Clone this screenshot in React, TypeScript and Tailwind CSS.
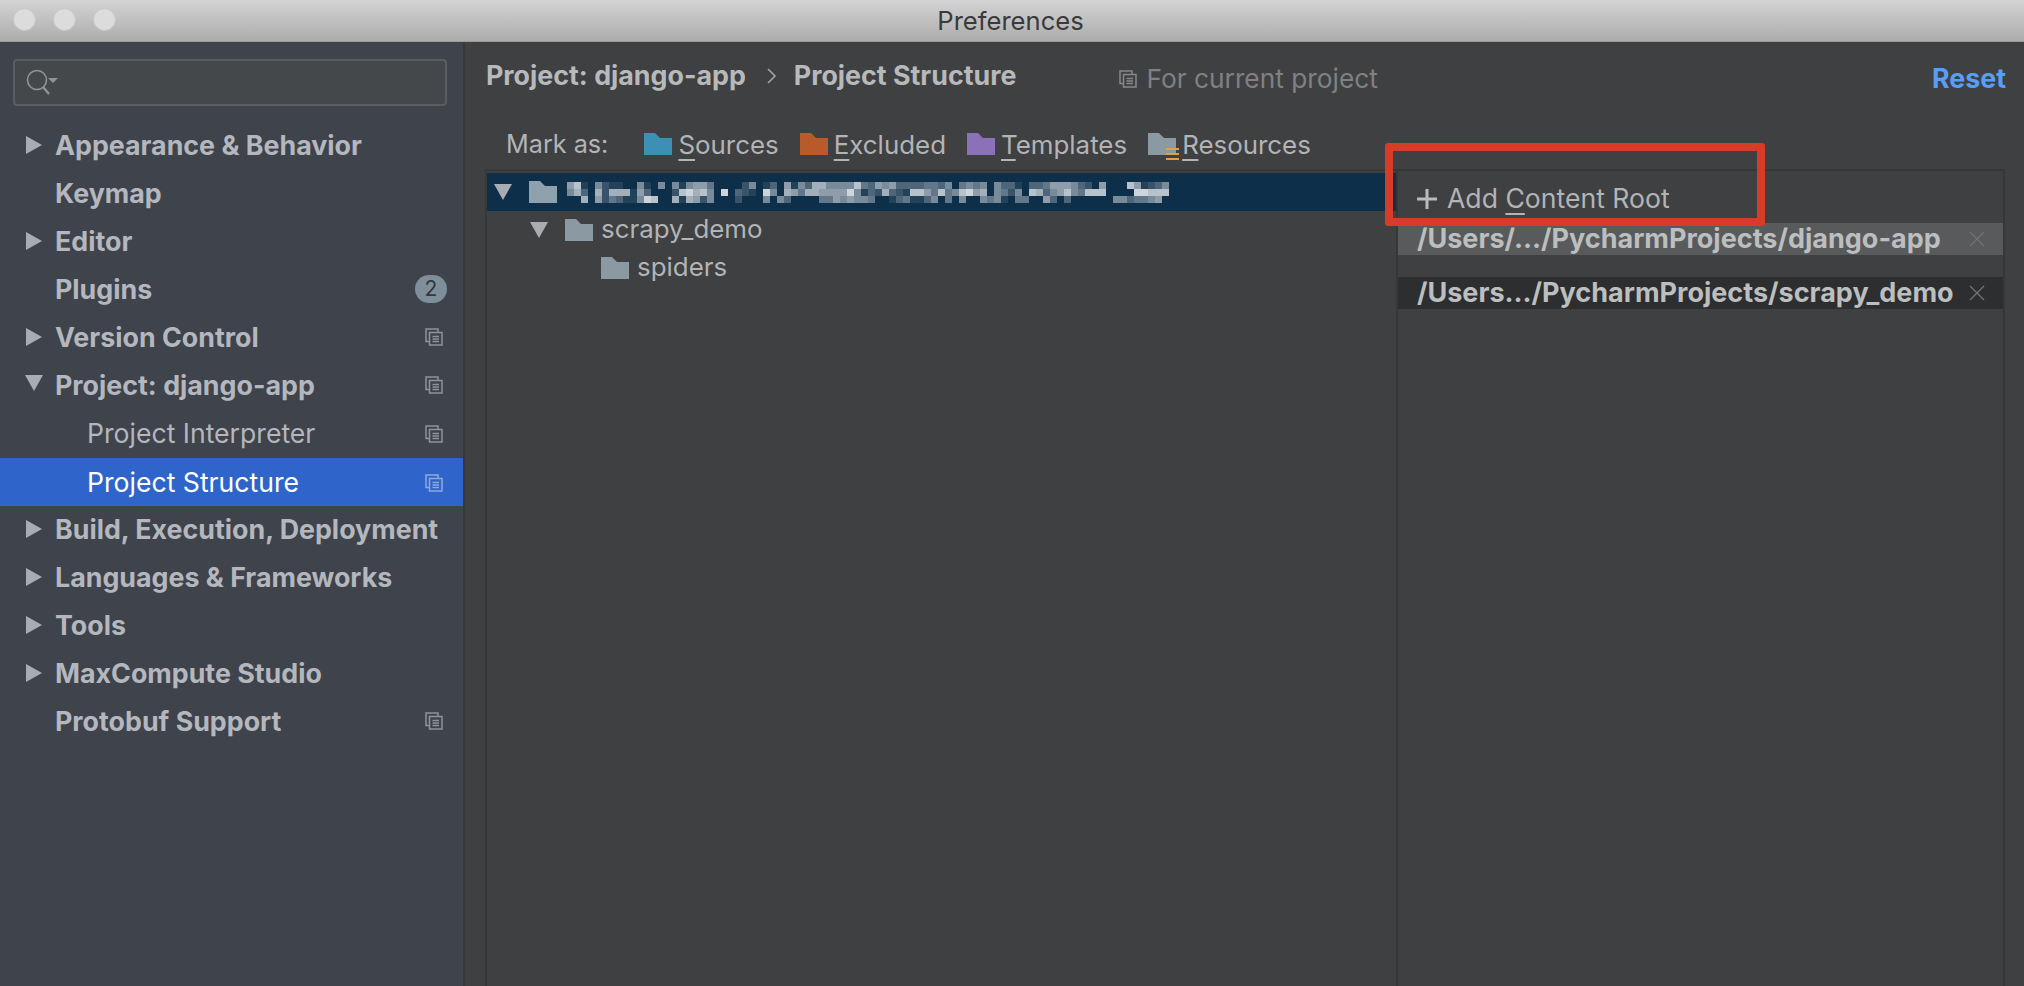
const mosaic = [
  '68105211005105051566400002501306153775555843656333344350454505331033466653206000861235',
  '57307277716300028978509032109507647766669513273218864845896705425087356854888000099888',
  '00706243115980071762500020005053000044656554001341135040500545104400630300000055344560',
];

const Triangle = ({ open = false, className = '' }: { open?: boolean; className?: string }) => (
  <svg width="18" height="18" viewBox="0 0 18 18" className={`fill-[#a9adb3] ${className}`}>
    {open ? <path d="M0 1 H18 L9 17 Z" /> : <path d="M1 0 L17 9 L1 18 Z" />}
  </svg>
);

const CopyIcon = ({ className = 'stroke-[#8f949b]' }: { className?: string }) => (
  <svg width="18" height="18" viewBox="0 0 18 18" fill="none" strokeWidth="1.5" className={className}>
    <path d="M4 13.5 H1 V1 H13 V4" />
    <path d="M4.5 4.5 H17 V17 H4.5 Z" />
    <path d="M7.5 8.5 H14 M7.5 11 H14 M7.5 13.5 H14" />
  </svg>
);

const Folder = ({ color, stripes = false }: { color: string; stripes?: boolean }) => (
  <svg width="28" height="24" viewBox="0 0 28 24" className="shrink-0 overflow-visible">
    <path d="M0 0 H11 L16 5 H28 V22 H0 Z" fill={color} />
    {stripes && <path d="M18 15 H31 V17 H18 Z M18 20 H31 V22 H18 Z M18 25 H31 V27 H18 Z" fill="#d9a441" />}
  </svg>
);

const navItems = [
  { label: 'Appearance & Behavior', arrow: 'right' },
  { label: 'Keymap' },
  { label: 'Editor', arrow: 'right' },
  { label: 'Plugins', badge: '2' },
  { label: 'Version Control', arrow: 'right', copy: true },
  { label: 'Project: django-app', arrow: 'down', copy: true },
  { label: 'Project Interpreter', child: true, copy: true },
  { label: 'Project Structure', child: true, copy: true, selected: true },
  { label: 'Build, Execution, Deployment', arrow: 'right' },
  { label: 'Languages & Frameworks', arrow: 'right' },
  { label: 'Tools', arrow: 'right' },
  { label: 'MaxCompute Studio', arrow: 'right' },
  { label: 'Protobuf Support', copy: true },
];

const Sidebar = () => (
  <aside className="w-[465px] shrink-0 border-r-2 border-[#35383d] bg-[#3e434c] pt-[17px]">
    <div className="mx-[13px] flex h-[47px] w-[434px] items-center rounded border-2 border-[#585e64] bg-[#45484a] pl-[10px]">
      <svg width="34" height="28" viewBox="0 0 34 28" fill="none" className="stroke-[#8f9498]">
        <circle cx="12" cy="11" r="9.5" strokeWidth="1.6" />
        <path d="M18 18 L24 25" strokeWidth="2.4" />
        <path d="M23 9 H33 L28 14 Z" className="fill-[#8f9498]" strokeWidth="0" />
      </svg>
    </div>
    <nav className="mt-[15px]">
      {navItems.map(item => (
        <div
          key={item.label}
          className={`relative flex h-[48px] items-center pr-5 ${
            item.selected ? 'mt-px -mb-px bg-[#2f65ca] text-white' : 'text-[#b4b7bd]'
          } ${item.child ? 'pl-[87px] pt-px text-[26.6px] font-normal' : 'pl-[55px] text-[26.8px] font-bold'}`}
        >
          {item.arrow && (
            <Triangle open={item.arrow === 'down'} className={`absolute left-[25px] ${item.arrow === 'down' ? 'top-[13px]' : 'top-[15px]'}`} />
          )}
          <span className="flex-1 whitespace-nowrap">{item.label}</span>
          {item.copy && <CopyIcon className={item.selected ? 'stroke-[#8fa9dc]' : 'stroke-[#8f949b]'} />}
          {item.badge && (
            <span className="-mr-1 flex h-[28px] w-[32px] items-center justify-center rounded-full bg-[#7f8e9b] text-[21px] font-normal text-[#33383f]">
              {item.badge}
            </span>
          )}
        </div>
      ))}
    </nav>
  </aside>
);

const MarkButton = ({ color, first, rest, stripes, className }: { color: string; first: string; rest: string; stripes?: boolean; className: string }) => (
  <div className={`flex items-center gap-[6px] ${className}`}>
    <Folder color={color} stripes={stripes} />
    <span>
      <span className="underline decoration-2 underline-offset-[5px]">{first}</span>
      {rest}
    </span>
  </div>
);

const BlurredName = () => (
  <svg width="602" height="21" viewBox="0 0 602 21" className="blur-[0.5px]">
    {mosaic.map((row, y) =>
      row.split('').map((v, x) => (
        <rect key={`${x}-${y}`} x={x * 7} y={y * 7} width="7" height="7" fill="#e4e7ea" fillOpacity={Number(v) / 10} />
      ))
    )}
  </svg>
);

const TreePanel = () => (
  <div className="w-[911px] shrink-0 border-r-2 border-[#363738] pt-[2px] text-[25.9px] text-[#b2b4b6]">
    <div className="flex h-[38px] items-center bg-[#0d2f4a] pl-[7px]">
      <Triangle open />
      <div className="ml-[17px] mt-[2px]"><Folder color="#8fa1ad" /></div>
      <div className="ml-[10px]"><BlurredName /></div>
    </div>
    <div className="flex h-[38px] items-center pl-[43px]">
      <Triangle open />
      <div className="ml-[17px] mt-[2px]"><Folder color="#8b99a3" /></div>
      <span className="ml-[8px] -mt-[2px]">scrapy_demo</span>
    </div>
    <div className="flex h-[38px] items-center pl-[114px]">
      <div className="mt-[2px]"><Folder color="#8b99a3" /></div>
      <span className="ml-[8px] -mt-[2px]">spiders</span>
    </div>
  </div>
);

const RootRow = ({ path, className }: { path: string; className: string }) => (
  <div className={`flex h-[32px] items-center pl-[19px] pr-[18px] text-[27px] font-bold whitespace-nowrap text-[#bcbebf] ${className}`}>
    <span className="flex-1">{path}</span>
    <svg width="16" height="16" viewBox="0 0 16 16" className="stroke-[#6f7173]" strokeWidth="1.4">
      <path d="M1 1 L15 15 M15 1 L1 15" />
    </svg>
  </div>
);

const RootsPanel = () => (
  <div className="flex-1">
    <div className="flex h-[52px] items-center gap-[10px] pl-[19px] pt-[3px] text-[26.6px] text-[#b2b4b6]">
      <svg width="20" height="20" viewBox="0 0 20 20" className="fill-[#b9bbbd]">
        <path d="M8.5 0 H11.5 V8.5 H20 V11.5 H11.5 V20 H8.5 V11.5 H0 V8.5 H8.5 Z" />
      </svg>
      <span>
        Add <span className="underline decoration-2 underline-offset-[5px]">C</span>ontent Root
      </span>
    </div>
    <RootRow path="/Users/.../PycharmProjects/django-app" className="bg-[#585a5c]" />
    <RootRow path="/Users.../PycharmProjects/scrapy_demo" className="mt-[22px] bg-[#2c2e30]" />
  </div>
);

export default function App() {
  return (
    <div className="relative flex h-[986px] w-[2024px] flex-col overflow-hidden bg-[#3f4042] font-['Inter',sans-serif]">
      <header className="relative flex h-[42px] shrink-0 items-center justify-center border-b border-[#9c9c9c] bg-gradient-to-b from-[#d4d4d4] to-[#acacac] pr-[3px] pt-px text-[25.6px] text-[#3a3a3a]">
        <div className="absolute left-[13px] top-[8px] flex gap-[17px]">
          <span className="h-[23px] w-[23px] rounded-full border border-[#c6c6c6] bg-[#dcdcdc]" />
          <span className="h-[23px] w-[23px] rounded-full border border-[#c6c6c6] bg-[#dcdcdc]" />
          <span className="h-[23px] w-[23px] rounded-full border border-[#c6c6c6] bg-[#dcdcdc]" />
        </div>
        Preferences
      </header>

      <div className="flex min-h-0 flex-1">
        <Sidebar />
        <main className="flex min-w-0 flex-1 flex-col pl-5 pr-[19px]">
          <div className="flex h-[67px] shrink-0 items-center text-[26.8px] font-bold text-[#b7b9bb]">
            <span className="ml-px">Project: django-app</span>
            <svg width="10" height="16" viewBox="0 0 10 16" fill="none" className="ml-[21px] stroke-[#a5a7a9]" strokeWidth="1.5">
              <path d="M1 1 L8 8 L1 15" />
            </svg>
            <span className="ml-[17px]">Project Structure</span>
            <div className="ml-[103px] mt-[7px] flex items-center gap-[9px] text-[26.3px] font-normal text-[#7f8183]">
              <CopyIcon className="stroke-[#86888a]" />
              <span>For current project</span>
            </div>
            <span className="ml-auto mt-[5px] mr-[-1px] text-[#589df6]">Reset</span>
          </div>
          <div className="flex h-[60px] shrink-0 items-center pl-[21px] pt-[12px] text-[25.9px] text-[#b2b4b6]">
            <span className="mr-[36px] text-[25.2px]">Mark as:</span>
            <MarkButton color="#3d8fb3" first="S" rest="ources" className="mr-[21px]" />
            <MarkButton color="#b85a2a" first="E" rest="xcluded" className="mr-[21px]" />
            <MarkButton color="#8a71b8" first="T" rest="emplates" className="mr-[21px]" />
            <MarkButton color="#8b99a3" first="R" rest="esources" stripes className="" />
          </div>
          <div className="flex min-h-0 flex-1 border-x-2 border-t-2 border-[#363738]">
            <TreePanel />
            <RootsPanel />
          </div>
        </main>
      </div>

      {/* annotation drawn over the screenshot */}
      <div className="absolute left-[1385px] top-[143px] h-[83px] w-[380px] rounded-[3px] border-8 border-[#d63c27]" />
    </div>
  );
}
